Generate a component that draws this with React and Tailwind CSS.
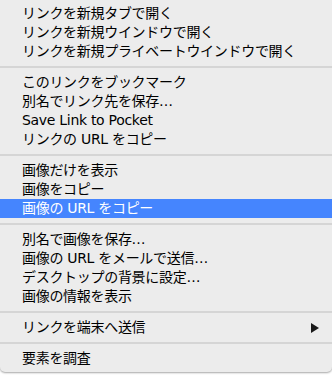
import React from "react";

const groups = [
  ["リンクを新規タブで開く", "リンクを新規ウインドウで開く", "リンクを新規プライベートウインドウで開く"],
  ["このリンクをブックマーク", "別名でリンク先を保存…", "Save Link to Pocket", "リンクの URL をコピー"],
  ["画像だけを表示", "画像をコピー", "画像の URL をコピー"],
  ["別名で画像を保存…", "画像の URL をメールで送信…", "デスクトップの背景に設定…", "画像の情報を表示"],
  ["リンクを端末へ送信"],
  ["要素を調査"],
];

function Item({ label }) {
  const active = label === "画像の URL をコピー";
  const sub = label === "リンクを端末へ送信";
  return (
    <div
      className={
        "flex h-[19px] items-center justify-between pl-[22px] pr-[13px] " +
        (active ? "bg-[#4585fe] text-white" : "text-black")
      }
    >
      <span className="whitespace-nowrap tracking-[-0.3px]">{label}</span>
      {sub && (
        <svg width="8" height="10" viewBox="0 0 8 10">
          <path d="M0 0 L8 5 L0 10 Z" fill="#1a1a1a" />
        </svg>
      )}
    </div>
  );
}

export default function App() {
  return (
    <div className="h-[376px] w-[332px] bg-white">
      <div
        className="flex flex-col rounded-b-[5px] bg-[#ececec] py-[4px] text-[14px] leading-[19px] shadow-[0_1px_2px_rgba(0,0,0,0.35)]"
        style={{ fontFamily: '"DejaVu Sans", "Noto Sans CJK JP", sans-serif' }}
      >
        {groups.map((g, i) => (
          <React.Fragment key={i}>
            {i > 0 && (
              <div className="flex h-[12px] items-center">
                <div className="h-[2px] w-full bg-[#d5d5d5]" />
              </div>
            )}
            {g.map((l) => (
              <Item key={l} label={l} />
            ))}
          </React.Fragment>
        ))}
      </div>
    </div>
  );
}
